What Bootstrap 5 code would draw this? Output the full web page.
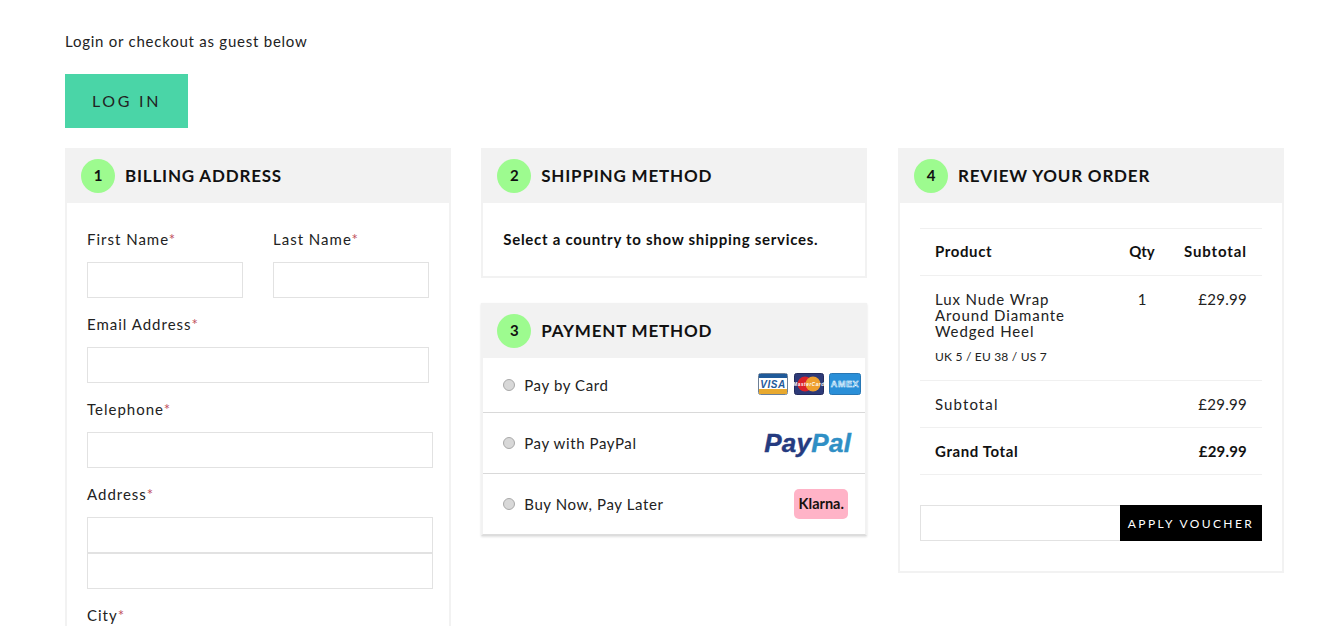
<!DOCTYPE html>
<html lang="en">
<head>
<meta charset="UTF-8" />
<meta name="viewport" content="width=device-width, initial-scale=1.0" />
<title>Checkout</title>
<link href="https://cdn.jsdelivr.net/npm/bootstrap@5.3.3/dist/css/bootstrap.min.css" rel="stylesheet" />
<style>
  html, body { height: 626px; overflow: hidden; }
  body { font-family: "Lato", "Liberation Sans", sans-serif; font-size: 15px; color: #222; letter-spacing: .6px; background: #fff; }
  .page-wrap { padding: 31px 54.5px 0 65px; }
  .login-note { line-height: 20px; margin-bottom: 23px; letter-spacing: .76px; }
  .btn-login { display: block; width: 123px; height: 54px; padding: 0; border: 0; border-radius: 0; background: #4ad5a7; color: #222; font-size: 16px; letter-spacing: 2.7px; line-height: 54px; }
  .checkout-cols { display: grid; grid-template-columns: 385.5px 386px 385.5px; column-gap: 30.75px; margin-top: 20px; align-items: start; }
  .step-box { border: 2px solid #f2f2f2; border-top: 0; background: #fff; }
  .step-box + .step-box { margin-top: 25px; }
  .step-head { height: 55px; margin: 0 -2px; padding-left: 16px; background: #f2f2f2; display: flex; align-items: center; gap: 10px; }
  .step-num { width: 34px; height: 34px; border-radius: 50%; background: #9dfb8f; color: #111; font-weight: 700; font-size: 15px; letter-spacing: 0; display: flex; align-items: center; justify-content: center; }
  .step-title { margin: 0; padding-top: 1px; font-family: "Lato", sans-serif; font-size: 17px; font-weight: 700; letter-spacing: .8px; color: #111; }
  .billing-body { padding: 26px 16px 0 20px; }
  .field-label { display: block; line-height: 20px; margin: 0 0 13px; letter-spacing: 1px; }
  .req { color: #c0505a; }
  .field-input { display: block; width: 100%; height: 36px; padding: 0 8px; border: 1px solid #e2e2e2; border-radius: 0; background: #fff; }
  .field-group { margin-bottom: 16px; }
  .name-row { display: grid; grid-template-columns: 156px 156px; column-gap: 30px; }
  .narrow-input { width: 342px; }
  .ship-note { padding: 26px 20px 27px 20px; font-weight: 700; font-size: 15px; letter-spacing: .72px; line-height: 20px; color: #111; }
  .pay-box { border-bottom-color: #ddd; box-shadow: 0 1px 2px rgba(0,0,0,.12); }
  .pay-row { display: flex; align-items: center; justify-content: space-between; padding-left: 20px; border-bottom: 1px solid #d9d9d9; }
  .pay-row:last-child { border-bottom: 0; }
  .pay-row-card { height: 55px; }
  .pay-row-paypal { height: 61px; }
  .pay-row-klarna { height: 60px; }
  .pay-opt { display: flex; align-items: center; gap: 9px; }
  .pay-radio { width: 12px; height: 12px; border-radius: 50%; background: #d8d8d8; border: 1px solid #a9a9a9; }
  .card-logos { display: flex; gap: 5.5px; margin-right: 4px; margin-top: -2px; }
  .paypal-logo { font-family: "Liberation Sans", sans-serif; font-size: 26px; font-weight: 700; font-style: italic; letter-spacing: .3px; line-height: 1; margin-right: 14px; color: #253b80; -webkit-text-stroke: .4px; }
  .paypal-logo span { color: #2f8fc5; }
  .klarna-logo { width: 54px; height: 30px; margin-right: 17px; border-radius: 5px; background: #ffb3c7; color: #17120f; font-size: 14.5px; font-weight: 700; letter-spacing: 0; display: flex; align-items: center; justify-content: center; }
  .review-body { padding: 25px 20px 30px; }
  .order-table { margin: 0; table-layout: fixed; width: 342px; color: inherit; border-top: 1px solid #f0f0f0; }
  .order-table th, .order-table td { padding: 15px; border-bottom: 1px solid #f0f0f0; background: transparent; box-shadow: none; vertical-align: top; line-height: 16px; color: #222; }
  .order-table th { padding-top: 14px; padding-bottom: 16px; color: #111; font-weight: 700; letter-spacing: .6px; }
  .order-table .col-qty { padding-left: 0; padding-right: 0; text-align: center; letter-spacing: 0; }
  .order-table .col-sub { padding-left: 0; text-align: right; letter-spacing: .3px; }
  .order-table th.col-sub { letter-spacing: .9px; }
  .order-table .sum-label { letter-spacing: 1.1px; }
  .order-table .sum-row .grand { font-weight: 700; color: #111; letter-spacing: .6px; }
  .order-table .sum-row .grand.col-sub { letter-spacing: .2px; }
  .item-name { display: block; max-width: 140px; letter-spacing: .9px; }
  .item-size { display: block; margin-top: 10px; font-size: 12px; letter-spacing: .2px; }
  .voucher-row { display: flex; margin-top: 30px; }
  .voucher-input { flex: 0 0 200px; height: 36px; border: 1px solid #e2e2e2; border-right: 0; }
  .btn-voucher { flex: 0 0 142px; height: 36px; padding: 2px 0 0; border: 0; border-radius: 0; background: #000; color: #fff; font-size: 12px; font-weight: 400; letter-spacing: 2.4px; }
  .btn-voucher:hover, .btn-login:hover { background: #000; color: #fff; }
</style>
</head>
<body>
<div class="page-wrap">
  <p class="login-note">Login or checkout as guest below</p>
  <a href="#" class="btn btn-login">LOG IN</a>

  <div class="checkout-cols">
    <!-- billing -->
    <section class="step-box">
      <div class="step-head"><span class="step-num">1</span><h2 class="step-title">BILLING ADDRESS</h2></div>
      <form class="billing-body">
        <div class="name-row field-group">
          <div><label class="field-label">First Name<span class="req">*</span></label><input class="field-input" type="text" /></div>
          <div><label class="field-label">Last Name<span class="req">*</span></label><input class="field-input" type="text" /></div>
        </div>
        <div class="field-group"><label class="field-label">Email Address<span class="req">*</span></label><input class="field-input narrow-input" type="email" /></div>
        <div class="field-group"><label class="field-label">Telephone<span class="req">*</span></label><input class="field-input" type="tel" /></div>
        <div class="field-group">
          <label class="field-label">Address<span class="req">*</span></label>
          <input class="field-input" type="text" />
          <input class="field-input" type="text" />
        </div>
        <div class="field-group"><label class="field-label">City<span class="req">*</span></label><input class="field-input" type="text" /></div>
      </form>
    </section>

    <!-- shipping and payment -->
    <div>
      <section class="step-box">
        <div class="step-head"><span class="step-num">2</span><h2 class="step-title">SHIPPING METHOD</h2></div>
        <p class="ship-note mb-0">Select a country to show shipping services.</p>
      </section>
      <section class="step-box pay-box">
        <div class="step-head"><span class="step-num">3</span><h2 class="step-title">PAYMENT METHOD</h2></div>
        <div class="pay-row pay-row-card">
          <span class="pay-opt"><span class="pay-radio"></span>Pay by Card</span>
          <span class="card-logos">
            <svg width="30" height="22" viewBox="0 0 30 22"><rect x=".5" y=".5" width="29" height="21" rx="2" fill="#fff" stroke="#6d7f95"/><rect x="1" y="1" width="28" height="4" fill="#1f5a99"/><rect x="1" y="16" width="28" height="5" fill="#e8a92f"/><text x="15" y="14.5" text-anchor="middle" font-family="Liberation Sans" font-size="10" font-weight="700" font-style="italic" fill="#1f5a99">VISA</text></svg>
            <svg width="30" height="22" viewBox="0 0 30 22"><rect x=".5" y=".5" width="29" height="21" rx="2" fill="#2d3a78" stroke="#232b5c"/><circle cx="11" cy="11" r="7.5" fill="#d9222a"/><circle cx="19" cy="11" r="7.5" fill="#ee9f2d"/><text x="15" y="12.8" text-anchor="middle" font-family="Liberation Sans" font-size="4.6" font-weight="700" font-style="italic" fill="#fff">MasterCard</text></svg>
            <svg width="32" height="22" viewBox="0 0 32 22"><rect x=".5" y=".5" width="31" height="21" rx="2" fill="#2a8fd8" stroke="#2877b4"/><text x="16" y="14.2" text-anchor="middle" font-family="Liberation Sans" font-size="9" font-weight="700" fill="#5ab0ea" stroke="#fff" stroke-width=".45">AMEX</text></svg>
          </span>
        </div>
        <div class="pay-row pay-row-paypal">
          <span class="pay-opt"><span class="pay-radio"></span>Pay with PayPal</span>
          <span class="paypal-logo">Pay<span>Pal</span></span>
        </div>
        <div class="pay-row pay-row-klarna">
          <span class="pay-opt"><span class="pay-radio"></span>Buy Now, Pay Later</span>
          <span class="klarna-logo">Klarna.</span>
        </div>
      </section>
    </div>

    <!-- order review -->
    <section class="step-box">
      <div class="step-head"><span class="step-num">4</span><h2 class="step-title">REVIEW YOUR ORDER</h2></div>
      <div class="review-body">
        <table class="table order-table">
          <colgroup><col /><col width="48" /><col width="96" /></colgroup>
          <thead>
            <tr><th>Product</th><th class="col-qty">Qty</th><th class="col-sub">Subtotal</th></tr>
          </thead>
          <tbody>
            <tr>
              <td><span class="item-name">Lux Nude Wrap Around Diamante Wedged Heel</span><span class="item-size">UK 5 / EU 38 / US 7</span></td>
              <td class="col-qty">1</td>
              <td class="col-sub">£29.99</td>
            </tr>
            <tr class="sum-row"><td class="sum-label">Subtotal</td><td></td><td class="col-sub">£29.99</td></tr>
            <tr class="sum-row"><td class="grand">Grand Total</td><td></td><td class="col-sub grand">£29.99</td></tr>
          </tbody>
        </table>
        <div class="voucher-row">
          <input class="voucher-input" type="text" />
          <button type="button" class="btn btn-voucher">APPLY VOUCHER</button>
        </div>
      </div>
    </section>
  </div>
</div>
<script src="https://cdn.jsdelivr.net/npm/bootstrap@5.3.3/dist/js/bootstrap.bundle.min.js"></script>
</body>
</html>
